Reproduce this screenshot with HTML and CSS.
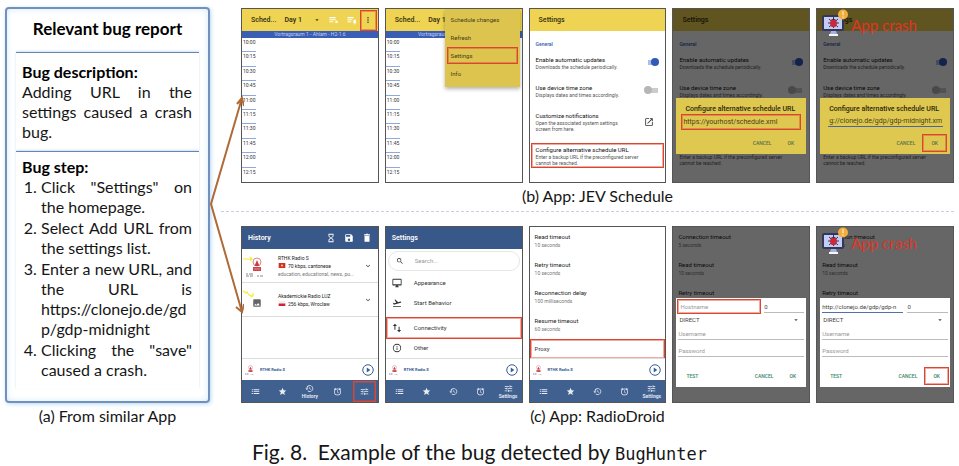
FILE: index.html
```html
<!DOCTYPE html>
<html lang="en">
<head>
<meta charset="utf-8">
<meta name="viewport" content="width=device-width, initial-scale=1">
<title>Example of the bug detected by BugHunter</title>
<link rel="stylesheet" href="styles.css">
</head>
<body>
<svg class="sprite" aria-hidden="true">
  <symbol id="chevron" viewBox="0 0 24 24"><path d="M7.4 8.6 12 13.2l4.6-4.6L18 10l-6 6-6-6z"/></symbol>
  <symbol id="caret" viewBox="0 0 24 24"><path d="M5 9l7 7 7-7z"/></symbol>
  <symbol id="more" viewBox="0 0 24 24"><circle cx="12" cy="5" r="2.3"/><circle cx="12" cy="12" r="2.3"/><circle cx="12" cy="19" r="2.3"/></symbol>
  <symbol id="list-star" viewBox="0 0 24 24"><path d="M1 5h15v2.5H1zM1 10h15v2.5H1zM1 15h9v2.5H1zM18 12l1.300 2.900 3.200.3-2.400 2.100.7 3.200-2.800-1.700-2.800 1.700.7-3.200-2.400-2.100 3.200-.3z"/></symbol>
  <symbol id="list-bell" viewBox="0 0 24 24"><path d="M1 5h15v2.500H1zM1 10h12v2.500H1zM1 15h9v2.500H1zM18.500 11c2 0 3 2 3 4v3l1.500 2h-9l1.500-2v-3c0-2 1-4 3-4zM17 21h3c0 2-3 2-3 0z"/></symbol>
  <symbol id="open" viewBox="0 0 24 24"><path d="M19 19H5V5h7V3H5a2 2 0 0 0-2 2v14a2 2 0 0 0 2 2h14a2 2 0 0 0 2-2v-7h-2zM14 3v2h3.600l-9.800 9.800 1.400 1.400L19 6.400V10h2V3z"/></symbol>
  <symbol id="hourglass" viewBox="0 0 24 24"><path d="M6 2v6l4 4-4 4v6h12v-6l-4-4 4-4V2zm10 14.500V20H8v-3.500l4-4zm-4-5-4-4V4h8v3.500z"/></symbol>
  <symbol id="save" viewBox="0 0 24 24"><path d="M17 3H5a2 2 0 0 0-2 2v14a2 2 0 0 0 2 2h14a2 2 0 0 0 2-2V7zm-5 16a3 3 0 1 1 0-6 3 3 0 0 1 0 6zm3-10H5V5h10z"/></symbol>
  <symbol id="trash" viewBox="0 0 24 24"><path d="M6 7h12v14H6zM5 3h4l1-1h4l1 1h4v3H5z"/></symbol>
  <symbol id="search" viewBox="0 0 24 24"><path d="M15.500 14h-.8l-.3-.3A6.500 6.500 0 1 0 13.700 14.400l.3.3v.8l5 5 1.500-1.500zm-6 0a4.500 4.500 0 1 1 0-9 4.500 4.500 0 0 1 0 9z"/></symbol>
  <symbol id="monitor" viewBox="0 0 24 24"><path d="M21 2H3a2 2 0 0 0-2 2v12a2 2 0 0 0 2 2h7v2H8v2h8v-2h-2v-2h7a2 2 0 0 0 2-2V4a2 2 0 0 0-2-2zm0 13H3V4h18z"/></symbol>
  <symbol id="takeoff" viewBox="0 0 24 24"><path d="M2.500 19h19v2h-19zM22 9.600c-.2-.8-1-1.300-1.800-1L14.900 10 8 3.600l-1.900.5 4.100 7.200-5 1.300-2-1.500-1.400.4 2.600 4.500L21 11.500c.8-.3 1.300-1.100 1-1.900z"/></symbol>
  <symbol id="updown" viewBox="0 0 24 24"><path d="M7 2l5 5H8.200v9H5.800V7H2zM17 22l-5-5h3.800V9h2.400v8H22z"/></symbol>
  <symbol id="info" viewBox="0 0 24 24"><path d="M11 7h2v2.300h-2zm0 4h2v6h-2zm1-9a10 10 0 1 0 0 20 10 10 0 0 0 0-20zm0 18a8 8 0 1 1 0-16 8 8 0 0 1 0 16z"/></symbol>
  <symbol id="play" viewBox="0 0 24 24"><circle cx="12" cy="12" r="10.500" fill="none" stroke="currentColor" stroke-width="2"/><path d="M9.500 7l7 5-7 5z"/></symbol>
  <symbol id="list" viewBox="0 0 24 24"><path d="M2 6h3v2.500H2zM2 11h3v2.500H2zM2 16h3v2.500H2zM7 6h15v2.500H7zM7 11h15v2.500H7zM7 16h15v2.500H7z"/></symbol>
  <symbol id="star" viewBox="0 0 24 24"><path d="M12 17.300 18.200 21l-1.600-7L22 9.200l-7.200-.6L12 2 9.200 8.600 2 9.200 7.500 14l-1.700 7z"/></symbol>
  <symbol id="history" viewBox="0 0 24 24"><path d="M13 3a9 9 0 0 0-9 9H1l4 4 4-4H6a7 7 0 1 1 2 5l-1.400 1.400A9 9 0 1 0 13 3zm-1 5v5l4.300 2.500.7-1.200-3.500-2.100V8z"/></symbol>
  <symbol id="alarm" viewBox="0 0 24 24"><path d="M22 5.700 17.400 1.900l-1.300 1.500 4.600 3.900zM7.900 3.400 6.600 1.900 2 5.700l1.300 1.500zM12.500 8H11v6l4.700 2.900.8-1.200-4-2.400zM12 4a9 9 0 1 0 0 18 9 9 0 0 0 0-18zm0 16a7 7 0 1 1 0-14 7 7 0 0 1 0 14z"/></symbol>
  <symbol id="tune" viewBox="0 0 24 24"><path d="M2 17v2h7v-2zM2 5v2h11V5zm11 16v-2h9v-2h-9v-2h-2v6zM7 9v2H2v2h5v2h2V9zm15 4v-2H11v2zm-7-4h2V7h5V5h-5V3h-2z"/></symbol>
  <symbol id="picture" viewBox="0 0 24 24"><path d="M21 19V5a2 2 0 0 0-2-2H5a2 2 0 0 0-2 2v14a2 2 0 0 0 2 2h14a2 2 0 0 0 2-2zM8.500 13.500l2.500 3 3.500-4.500 4.500 6H5z"/></symbol>
  <symbol id="station" viewBox="0 0 26 20">
    <circle cx="13" cy="5" r="4" fill="none" stroke="#e0868b"/><path d="M10.500 9l2.500-6 2.500 6z" fill="#c83c46"/><path d="M9 10h8v4H9z" fill="#cf444c"/><path d="M10 12h6" stroke="#eba5a8" stroke-width=".7"/>
    <path d="M2 17h2M5 17h4M2 19h3M6 19h3M13 19h2M16 19h3" stroke="#888" stroke-width="1"/>
  </symbol>
  <symbol id="bug" viewBox="0 0 28 28">
    <path d="M3 6h17a3 3 0 0 1 3 3v11a2 2 0 0 1-2 2H3a2 2 0 0 1-2-2V8a2 2 0 0 1 2-2z" fill="#34365c"/><path d="M3 8h18v12H3z" fill="#c3cdf3"/>
    <path d="M10 22h5l1 3H9z" fill="#a7b2dc"/><path d="M8 25h9v2H8z" fill="#f3f5ff"/>
    <path d="M8 10l9 8M17 10l-9 8M7 14h11M12.500 8v11" stroke="#39324f" stroke-width="1"/><ellipse cx="12.500" cy="14.300" rx="3.400" ry="4" fill="#c9283d"/><path d="M10 11a3 2.500 0 0 1 5 0z" fill="#39324f"/>
    <circle cx="22" cy="5.500" r="5" fill="#f1ae3d"/><path d="M22 2.300v4M22 7.600v1.200" stroke="#fff1c9" stroke-width="1.200"/>
  </symbol>
</svg>

<figure class="figure">
  <div class="panels">
    <section class="similar">
      <article class="report">
        <h1>Relevant bug report</h1>
        <div class="block">
          <h2>Bug description:</h2>
          <p>Adding URL in the settings caused a crash bug.</p>
        </div>
        <div class="block steps">
          <h2>Bug step:</h2>
          <ol>
            <li>Click "Settings" on the homepage.</li>
            <li>Select Add URL from the settings list.</li>
            <li><span class="lead">Enter a new URL, and the URL is</span><span class="url">https://clonejo.de/gdp/gdp-midnight</span></li>
            <li>Clicking the "save" caused a crash.</li>
          </ol>
        </div>
      </article>
      <p class="caption">(a) From similar App</p>
    </section>

    <svg class="arrows" viewBox="0 0 34 240" aria-hidden="true"><path d="M32 14 1 120l31 108M27 20l5-6 2 8M26 223l6 5 2-8"/></svg>

    <div class="apps">
      <section class="app">
        <div class="screens">
          <div class="phone jev">
            <header class="bar"><b>Sched...</b><b class="day">Day 1</b><svg class="i6"><use href="#caret"/></svg><span class="tools"><svg class="i10"><use href="#list-star"/></svg><svg class="i10"><use href="#list-bell"/></svg></span><button class="more mark" aria-label="More"><svg class="i8"><use href="#more"/></svg></button></header>
            <div class="room">Vortragsraum 1 - Ahlam - H2-1.6</div>
            <ul class="times"><li>10:00</li><li>10:15</li><li>10:30</li><li>10:45</li><li>11:00</li><li>11:15</li><li>11:30</li><li>11:45</li><li>12:00</li><li>12:15</li></ul>
          </div>
          <div class="phone jev">
            <header class="bar"><b>Sched...</b><b class="day">Day 1</b></header>
            <div class="room">Vortragsraum 1 - Ahlam - H2-1.6</div>
            <ul class="times"><li>10:00</li><li>10:15</li><li>10:30</li><li>10:45</li><li>11:00</li><li>11:15</li><li>11:30</li><li>11:45</li><li>12:00</li><li>12:15</li></ul>
            <div class="menu"><button>Schedule changes</button><button>Refresh</button><button class="mark">Settings</button><button>Info</button></div>
          </div>
          <div class="phone jev">
            <header class="bar"><b>Settings</b></header>
            <div class="prefs">
              <h3>General</h3>
              <label class="pref"><span><strong>Enable automatic updates</strong><small>Downloads the schedule periodically.</small></span><input type="checkbox" class="switch" checked></label>
              <label class="pref"><span><strong>Use device time zone</strong><small>Displays dates and times accordingly.</small></span><input type="checkbox" class="switch"></label>
              <div class="pref wide"><span><strong>Customize notifications</strong><small>Open the associated system settings<br>screen from here.</small></span><svg class="i10 open"><use href="#open"/></svg></div>
              <div class="pref last mark"><span><strong>Configure alternative schedule URL</strong><small>Enter a backup URL if the preconfigured server<br>cannot be reached.</small></span></div>
            </div>
          </div>
          <div class="phone jev">
            <header class="bar"><b>Settings</b></header>
            <div class="prefs">
              <h3>General</h3>
              <label class="pref"><span><strong>Enable automatic updates</strong><small>Downloads the schedule periodically.</small></span><input type="checkbox" class="switch" checked></label>
              <label class="pref"><span><strong>Use device time zone</strong><small>Displays dates and times accordingly.</small></span><input type="checkbox" class="switch"></label>
              <div class="pref wide"></div>
              <div class="pref last"><span><strong>Configure alternative schedule URL</strong><small>Enter a backup URL if the preconfigured server<br>cannot be reached.</small></span></div>
            </div>
            <div class="shade"></div>
            <form class="dialog schedule"><label for="alt1">Configure alternative schedule URL</label><input id="alt1" class="mark" type="text" value="https://yourhost/schedule.xml"><div class="actions"><button type="button">CANCEL</button><button type="button">OK</button></div></form>
          </div>
          <div class="phone jev">
            <header class="bar"><b>Settings</b></header>
            <div class="prefs">
              <h3>General</h3>
              <label class="pref"><span><strong>Enable automatic updates</strong><small>Downloads the schedule periodically.</small></span><input type="checkbox" class="switch" checked></label>
              <label class="pref"><span><strong>Use device time zone</strong><small>Displays dates and times accordingly.</small></span><input type="checkbox" class="switch"></label>
              <div class="pref wide"></div>
              <div class="pref last"><span><strong>Configure alternative schedule URL</strong><small>Enter a backup URL if the preconfigured server<br>cannot be reached.</small></span></div>
            </div>
            <div class="shade"></div>
            <form class="dialog schedule"><label for="alt2">Configure alternative schedule URL</label><input id="alt2" class="typed" type="text" value="g://clonejo.de/gdp/gdp-midnight.xml"><div class="actions"><button type="button">CANCEL</button><button type="button" class="mark">OK</button></div></form>
            <div class="crash"><svg><use href="#bug"/></svg>App crash</div>
          </div>
        </div>
        <p class="caption">(b) App: JEV Schedule</p>
      </section>

      <section class="app second">
        <div class="screens">
          <div class="phone radio">
            <header class="bar"><b>History</b><span class="tools"><svg class="i10"><use href="#hourglass"/></svg><svg class="i10"><use href="#save"/></svg><svg class="i10"><use href="#trash"/></svg></span></header>
            <div class="station"><svg class="logo" viewBox="0 0 30 24"><use href="#station" x="2" y="3" width="26" height="20"/><path d="M1 5h9M8 3l2 2-2 2" fill="none" stroke="#f2ee30" stroke-width="1.200"/></svg><div><p>RTHK Radio S</p><p><svg class="flag" viewBox="0 0 8 6"><path fill="#d2311f" d="M0 0h8v6H0z"/><circle cx="4" cy="3" r="1.300" fill="#f6c3b4"/></svg>70 kbps, cantonese</p><p class="tags">education, educational, news, pu...</p></div><svg class="i8"><use href="#chevron"/></svg></div>
            <div class="station"><svg class="logo" viewBox="0 0 30 24"><path d="M1 3l3 2 1-1 2 3 3 1M8 9l3-1V5" fill="none" stroke="#f2ee30" stroke-width="1.200"/><use href="#picture" x="10" y="10" width="10" height="10"/></svg><div><p>Akademickie Radio LUZ</p><p><svg class="flag" viewBox="0 0 8 6"><path fill="#eee" d="M0 0h8v3H0z"/><path fill="#d2213c" d="M0 3h8v3H0z"/></svg>256 kbps, Wroclaw</p></div><svg class="i8"><use href="#chevron"/></svg></div>
            <div class="player"><svg class="mini"><use href="#station"/></svg><b>RTHK Radio S</b><svg class="i12"><use href="#play"/></svg></div>
            <nav class="tabs"><button aria-label="Stations"><svg><use href="#list"/></svg></button><button aria-label="Favourites"><svg><use href="#star"/></svg></button><button><svg><use href="#history"/></svg>History</button><button aria-label="Alarm"><svg><use href="#alarm"/></svg></button><button class="mark" aria-label="Settings"><svg><use href="#tune"/></svg></button></nav>
          </div>
          <div class="phone radio">
            <header class="bar"><b>Settings</b></header>
            <div class="options">
              <label class="find"><svg class="i8"><use href="#search"/></svg><input type="search" placeholder="Search..." aria-label="Search"></label>
              <a href="#"><svg class="i10"><use href="#monitor"/></svg>Appearance</a>
              <a href="#"><svg class="i10"><use href="#takeoff"/></svg>Start Behavior</a>
              <a href="#" class="mark"><svg class="i10"><use href="#updown"/></svg>Connectivity</a>
              <a href="#"><svg class="i10"><use href="#info"/></svg>Other</a>
            </div>
            <div class="player"><svg class="mini"><use href="#station"/></svg><b>RTHK Radio S</b><svg class="i12"><use href="#play"/></svg></div>
            <nav class="tabs"><button aria-label="Stations"><svg><use href="#list"/></svg></button><button aria-label="Favourites"><svg><use href="#star"/></svg></button><button aria-label="History"><svg><use href="#history"/></svg></button><button aria-label="Alarm"><svg><use href="#alarm"/></svg></button><button><svg><use href="#tune"/></svg>Settings</button></nav>
          </div>
          <div class="phone radio">
            <dl class="timeouts"><div><dt>Read timeout</dt><dd>10 seconds</dd></div><div><dt>Retry timeout</dt><dd>10 seconds</dd></div><div><dt>Reconnection delay</dt><dd>100 milliseconds</dd></div><div><dt>Resume timeout</dt><dd>60 seconds</dd></div></dl>
            <a href="#" class="proxy mark">Proxy</a>
            <div class="player"><svg class="mini"><use href="#station"/></svg><b>RTHK Radio S</b><svg class="i12"><use href="#play"/></svg></div>
            <nav class="tabs"><button aria-label="Stations"><svg><use href="#list"/></svg></button><button aria-label="Favourites"><svg><use href="#star"/></svg></button><button aria-label="History"><svg><use href="#history"/></svg></button><button aria-label="Alarm"><svg><use href="#alarm"/></svg></button><button><svg><use href="#tune"/></svg>Settings</button></nav>
          </div>
          <div class="phone radio">
            <dl class="timeouts"><div><dt>Connection timeout</dt><dd>5 seconds</dd></div><div><dt>Read timeout</dt><dd>10 seconds</dd></div><div><dt>Retry timeout</dt></div></dl>
            <div class="shade"></div>
            <form class="dialog proxyform">
              <div class="hostline"><input class="mark" type="text" placeholder="Hostname" aria-label="Hostname"><input class="port" type="text" value="0" aria-label="Port"></div>
              <div class="pick"><select aria-label="Proxy type"><option>DIRECT</option></select><svg class="i6"><use href="#caret"/></svg></div>
              <input type="text" placeholder="Username" aria-label="Username"><input class="pass" type="password" placeholder="Password" aria-label="Password">
              <div class="actions"><button type="button" class="test">TEST</button><button type="button">CANCEL</button><button type="button">OK</button></div>
            </form>
          </div>
          <div class="phone radio">
            <dl class="timeouts"><div><dt>Connection timeout</dt><dd>5 seconds</dd></div><div><dt>Read timeout</dt><dd>10 seconds</dd></div><div><dt>Retry timeout</dt></div></dl>
            <div class="shade"></div>
            <form class="dialog proxyform">
              <div class="hostline"><input class="host" type="text" value="http://clonejo.de/gdp/gdp-n" aria-label="Hostname"><input class="port" type="text" value="0" aria-label="Port"></div>
              <div class="pick"><select aria-label="Proxy type"><option>DIRECT</option></select><svg class="i6"><use href="#caret"/></svg></div>
              <input type="text" placeholder="Username" aria-label="Username"><input class="pass" type="password" placeholder="Password" aria-label="Password">
              <div class="actions"><button type="button" class="test">TEST</button><button type="button">CANCEL</button><button type="button" class="mark">OK</button></div>
            </form>
            <div class="crash"><svg><use href="#bug"/></svg>App crash</div>
          </div>
        </div>
        <p class="caption">(c) App: RadioDroid</p>
      </section>
    </div>
  </div>
  <figcaption>Fig. 8.&ensp;Example of the bug detected by <code>BugHunter</code></figcaption>
</figure>
</body>
</html>
```
FILE: styles.css
```css
* { box-sizing: border-box; }
body, figure, h1, h2, h3, p, ol, ul, dl, dd { margin: 0; padding: 0; }
body { background: #fff; color: #161616; font-family: Lato, "Open Sans", sans-serif; }
button, input, select { font: inherit; color: inherit; border: 0; padding: 0; margin: 0; background: none; border-radius: 0; min-width: 0; }
a { color: inherit; text-decoration: none; }
svg { fill: currentColor; flex: none; }
.sprite { position: absolute; width: 0; height: 0; }
.i6 { width: 6px; height: 6px; }
.i8 { width: 8px; height: 8px; }
.i10 { width: 10px; height: 10px; }
.i12 { width: 12px; height: 12px; }

.figure { padding: 7px 5px 0; }
.panels { display: grid; grid-template-columns: 205px 31px minmax(0, 1fr); }
.similar { display: flex; flex-direction: column; }
.report { flex: 1; border: 2px solid #7390bd; border-radius: 4px; padding: 0 9px; box-shadow: 1px 1px 4px #b5daf2, inset 0 0 6px #d3eafa; font-size: 16px; line-height: 20px; }
.report h1 { font-size: 17px; line-height: 24px; text-align: center; padding: 8px 0 11px; color: #000; }
.block { border-top: 1px solid #6685b2; box-shadow: 0 -1px 2px #c9e2f5; padding: 9px 7px 9px 6px; text-align: justify; }
.block h2 { font-size: 16px; line-height: 20px; color: #000; }
.steps { padding-top: 5px; }
.report ol { padding-left: 19px; display: grid; gap: 1px; }
.lead { display: block; text-align-last: justify; }
.url { display: block; word-break: break-all; text-align: left; }
.caption { text-align: center; font-size: 16px; line-height: 20px; padding-top: 3px; }
.arrows { width: 34px; height: 240px; margin-top: 77px; fill: none; stroke: #b06a36; stroke-width: 2; z-index: 1; }

.apps { padding-top: 1px; }
.second { margin: 5px 0 0 -20px; padding: 14px 0 0 20px; border-top: 1px dashed #c9cdea; }
.screens { display: grid; grid-template-columns: repeat(5, minmax(0, 1fr)); gap: 6px; }
.phone { position: relative; min-height: 175px; display: flex; flex-direction: column; border: 1px solid #555; font-family: Roboto, sans-serif; font-size: 6px; line-height: 8px; color: #333; background: #fff; overflow: hidden; }
.mark { outline: 1px solid #dc4530; box-shadow: inset 0 0 0 1px rgba(220, 69, 48, .45); }
.bar { display: flex; align-items: center; height: 22px; padding: 0 2px 0 9px; font-size: 7px; }
.bar b { font-weight: 600; }
.tools { display: flex; margin-left: auto; gap: 8px; color: #fff; }
.jev .bar { background: #efd453; color: #3d3614; }
.jev .day { margin: 0 12px 0 8px; }
.more { width: 15px; height: 19px; margin-left: 4px; display: grid; place-items: center; }
.room { background: #3a5db5; color: #c3d0f0; font-size: 5px; line-height: 7px; text-align: center; }
.times { flex: 1; display: grid; grid-auto-rows: 1fr; list-style: none; font-size: 5px; line-height: 8px; }
.times li { width: 14px; padding-left: 1px; border-bottom: 1px solid #8faada; }
.times li:last-child { border: 0; }
.menu { position: absolute; top: 0; right: 2px; width: 75px; display: grid; background: #ddc44f; box-shadow: 0 2px 4px rgba(0, 0, 0, .3); color: #453c17; padding: 3px; }
.menu button { height: 15px; margin-bottom: 3px; padding-left: 3px; text-align: left; }

.prefs h3 { font-size: 5px; line-height: 8px; font-weight: 500; color: #3558b0; padding: 9px 6px 8px; }
.pref { display: flex; justify-content: space-between; align-items: flex-start; height: 28px; padding: 0 6px; }
.pref strong, .pref small { display: block; }
.pref strong { font-size: 6px; line-height: 8px; font-weight: 400; color: #111; }
.pref small { font-size: 5px; line-height: 6px; color: #555; white-space: nowrap; }
.pref.wide { height: 32px; }
.open { margin: 5px 5px 0 0; }
.pref.last { height: 23px; margin: 0 2px; padding: 2px 4px; }
.switch { appearance: none; position: relative; width: 13px; height: 8px; margin-top: 2px; background: linear-gradient(#ccc, #ccc) center / 10px 5px no-repeat; }
.switch::before { content: ""; position: absolute; left: -2px; width: 8px; height: 8px; border-radius: 50%; background: #b6b6b6; }
.switch:checked { background-image: linear-gradient(#aabfe8, #aabfe8); }
.switch:checked::before { left: 5px; background: #3159b6; }

.shade { position: absolute; inset: 0; background: rgba(0, 0, 0, .6); }
.dialog { position: absolute; left: 3px; right: 3px; display: flex; flex-direction: column; }
.actions { display: flex; align-items: center; justify-content: flex-end; font-size: 5px; font-weight: 500; margin-top: auto; }
.actions button { padding: 0 8px; height: 16px; }
.schedule { top: 89px; height: 56px; padding: 7px 4px 3px; background: #dfc850; color: #4a4118; font-size: 7px; }
.schedule label { padding-left: 5px; font-weight: 500; color: #2c270f; white-space: nowrap; }
.schedule input { height: 14px; margin: 2px; padding: 0 1px; }
.schedule .typed { height: 12px; margin: 2px 3px 2px 4px; border-bottom: 1px solid #4866a4; }
.schedule .actions { color: #56704e; }
.crash { position: absolute; left: 4px; top: 0; display: flex; align-items: flex-start; gap: 2px; font: 15px/32px Lato, sans-serif; color: #e03424; }
.crash svg { width: 28px; height: 28px; }

.radio .bar { background: #38588a; color: #fff; padding: 0 6px; }
.radio .tools { gap: 8px; }
.station { display: flex; align-items: center; height: 34px; border-bottom: 1px solid #ddd; padding: 0 6px 0 0; font-size: 5px; line-height: 8px; color: #222; }
.station > div { flex: 1; min-width: 0; white-space: nowrap; }
.logo { width: 30px; height: 24px; margin-right: 6px; color: #666; }
.flag { width: 8px; height: 5px; margin-right: 2px; }
.tags { color: #777; }
.player { display: flex; align-items: center; gap: 3px; margin-top: auto; height: 22px; padding: 0 4px 0 2px; border-top: 1px solid #ddd; color: #365d94; font-size: 4px; }
.player .i12 { margin-left: auto; }
.mini { width: 13px; height: 10px; }
.tabs { display: grid; grid-template-columns: repeat(5, 1fr); height: 22px; background: #40618f; color: #e9eef5; font-size: 5px; line-height: 6px; font-weight: 600; }
.tabs button { display: flex; flex-direction: column; align-items: center; justify-content: center; }
.tabs svg { width: 9px; height: 9px; }
.tabs .mark { margin: 2px 3px 1px; }
.options { display: grid; padding-top: 2px; }
.options a { display: flex; align-items: center; gap: 12px; height: 20px; margin: 0 1px; padding-left: 5px; }
.options .mark { margin-top: 5px; }
.find { display: flex; align-items: center; gap: 11px; height: 20px; margin: 0 2px 2px; padding-left: 7px; border: 1px solid #e6e6e6; border-radius: 10px; }
.find input { flex: 1; }
::placeholder { color: #999; opacity: 1; }
.timeouts { padding: 6px 5px 0; }
.timeouts div { height: 28px; }
.timeouts dt { color: #222; }
.timeouts dd { font-size: 5px; color: #777; }
.proxy { display: block; height: 18px; line-height: 17px; padding-left: 4px; margin: 0 1px; }
.timeouts + .proxy { margin-top: -5px; }
.proxyform { top: 71px; height: 89px; padding: 2px 2px 3px; background: #fff; color: #444; }
.proxyform input { height: 13px; border-bottom: 1px solid #bbb; }
.hostline { display: flex; gap: 4px; }
.hostline input:first-child { flex: 2; }
.hostline .mark { border: 0; padding-left: 2px; }
.hostline .host { border-color: #5170ac; }
.hostline .port { flex: 1; }
.pick { position: relative; height: 14px; display: flex; align-items: center; }
.pick select { appearance: none; flex: 1; padding-left: 1px; }
.pick .i6 { position: absolute; right: 5px; pointer-events: none; }
.proxyform .pass { margin-top: 4px; }
.proxyform .actions { color: #3a8469; }
.proxyform .test { margin-right: auto; }

figcaption { text-align: center; font-size: 21px; line-height: 28px; padding-top: 12px; }
code { font-family: "DejaVu Sans Mono", monospace; font-size: 17px; }
```
